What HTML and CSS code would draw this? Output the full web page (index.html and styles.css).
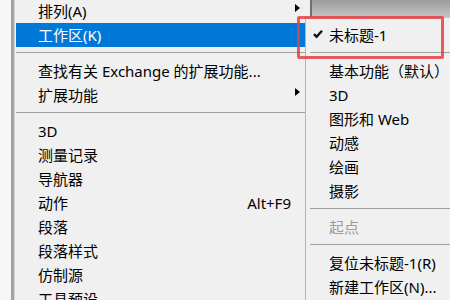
FILE: index.html
```html
<!DOCTYPE html>
<html lang="zh-CN">
<head>
  <meta charset="UTF-8">
  <title>工作区菜单</title>
  <link rel="stylesheet" href="styles.css">
</head>
<body>
  <div class="screen">
    <div class="edge"></div>

    <!-- Main menu -->
    <div class="menu main-menu">
      <div class="item top-item"><span>排列(A)</span><i class="arrow"></i></div>
      <div class="item active"><span>工作区(K)</span></div>
      <div class="sep"></div>
      <div class="item"><span>查找有关 Exchange 的扩展功能...</span></div>
      <div class="item"><span>扩展功能</span><i class="arrow"></i></div>
      <div class="sep"></div>
      <div class="item"><span>3D</span></div>
      <div class="item"><span>测量记录</span></div>
      <div class="item"><span>导航器</span></div>
      <div class="item"><span>动作</span><span class="key">Alt+F9</span></div>
      <div class="item"><span>段落</span></div>
      <div class="item"><span>段落样式</span></div>
      <div class="item"><span>仿制源</span></div>
      <div class="item"><span>工具预设</span></div>
    </div>

    <!-- Workspace submenu -->
    <div class="sub-wrap">
      <div class="panel-top"></div>
      <div class="menu sub-menu">
        <div class="item checked">
          <svg class="check" width="10" height="10" viewBox="0 0 10 10">
            <path d="M1 5.2 L3.6 7.8 L9 1.8" fill="none" stroke="#111" stroke-width="2.4"/>
          </svg>
          <span>未标题-1</span>
        </div>
        <div class="sep"></div>
        <div class="item"><span>基本功能（默认）</span></div>
        <div class="item"><span>3D</span></div>
        <div class="item"><span>图形和 Web</span></div>
        <div class="item"><span>动感</span></div>
        <div class="item"><span>绘画</span></div>
        <div class="item"><span>摄影</span></div>
        <div class="sep"></div>
        <div class="item disabled"><span>起点</span></div>
        <div class="sep"></div>
        <div class="item"><span>复位未标题-1(R)</span></div>
        <div class="item"><span>新建工作区(N)...</span></div>
      </div>
    </div>

    <div class="mark"></div>
  </div>
</body>
</html>
```

FILE: styles.css
```css
* { box-sizing: border-box; }

body {
  margin: 0;
  background: #f0f0f0;
  font-family: "Noto Sans", "Noto Sans CJK SC", sans-serif;
  font-size: 15px;
  color: #000;
}

.screen {
  position: relative;
  width: 450px;
  height: 300px;
  overflow: hidden;
  display: flex;
}

.edge {
  width: 15px;
  flex: none;
  background: linear-gradient(to right, #f6f6f6 0, #f6f6f6 11px, #a2a2a2 11px, #a2a2a2 14px, #d4d4d4 14px);
}

.menu {
  background: #f0f0f0;
}

.main-menu {
  width: 290px;
  flex: none;
  padding-left: 1px;
  margin-top: -1px;
}

.item {
  height: 24px;
  line-height: 24px;
  display: flex;
  align-items: center;
  padding-left: 22px;
  padding-right: 5px;
  white-space: nowrap;
}

.item.active {
  background: #0078d7;
  color: #fff;
}

.arrow {
  margin-left: auto;
  margin-bottom: 6px;
  width: 0;
  height: 0;
  border-top: 4.5px solid transparent;
  border-bottom: 4.5px solid transparent;
  border-left: 5px solid #000;
}

.key {
  margin-left: auto;
  margin-right: 9px;
}

.sep {
  height: 12px;
  padding-top: 5px;
}

.sep::before {
  content: "";
  display: block;
  height: 1px;
  background: #a0a0a0;
}

.sub-wrap {
  flex: 1;
  display: flex;
  flex-direction: column;
  min-width: 0;
}

.panel-top {
  height: 17px;
  flex: none;
  margin-left: 5px;
  border-left: 2px solid #6f6f6f;
  background: linear-gradient(to bottom, #9c9c9c, #c4c4c4);
}

.sub-menu {
  flex: 1;
  border-left: 1px solid #b4b4b4;
  border-top: 1px solid #c8c8c8;
  padding-top: 5px;
}

.sub-menu .item {
  padding-left: 23px;
}

.sub-menu .sep {
  padding-left: 4px;
}

.check {
  margin-left: -16px;
  margin-right: 6px;
  margin-bottom: 2px;
}

.disabled {
  color: #9b9b9b;
}

.mark {
  position: absolute;
  left: 297px;
  top: 16px;
  width: 147px;
  height: 43px;
  border: 3px solid rgba(228, 64, 70, 0.85);
  border-radius: 2px;
}
```
